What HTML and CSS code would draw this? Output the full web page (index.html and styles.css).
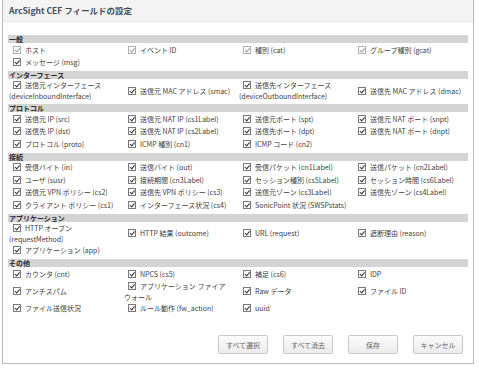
FILE: index.html
```html
<!DOCTYPE html>
<html lang="ja">
<head>
  <meta charset="UTF-8" />
  <meta name="viewport" content="width=device-width, initial-scale=1.0"/>
  <title>ArcSight CEF フィールドの設定</title>
  <link rel="stylesheet" href="styles.css">
</head>
<body>
  <div class="dialog">
    <div class="dialog-head">ArcSight CEF フィールドの設定</div>

    <div class="dialog-body">
      <!-- 一般 -->
      <div class="section">
        <div class="section-title">一般</div>
        <div class="fields">
          <label class="field"><span class="cb cb-locked"></span>ホスト</label>
          <label class="field"><span class="cb cb-locked"></span>イベント ID</label>
          <label class="field"><span class="cb cb-locked"></span>種別 (cat)</label>
          <label class="field"><span class="cb cb-locked"></span>グループ種別 (gcat)</label>
          <label class="field"><span class="cb"></span>メッセージ (msg)</label>
        </div>
      </div>

      <!-- インターフェース -->
      <div class="section">
        <div class="section-title">インターフェース</div>
        <div class="fields">
          <label class="field"><span class="cb"></span>送信元インターフェース<br>(deviceInboundInterface)</label>
          <label class="field"><span class="cb"></span>送信元 MAC アドレス (smac)</label>
          <label class="field"><span class="cb"></span>送信先インターフェース<br>(deviceOutboundInterface)</label>
          <label class="field"><span class="cb"></span>送信先 MAC アドレス (dmac)</label>
        </div>
      </div>

      <!-- プロトコル -->
      <div class="section">
        <div class="section-title">プロトコル</div>
        <div class="fields">
          <label class="field"><span class="cb"></span>送信元 IP (src)</label>
          <label class="field"><span class="cb"></span>送信元 NAT IP (cs1Label)</label>
          <label class="field"><span class="cb"></span>送信元ポート (spt)</label>
          <label class="field"><span class="cb"></span>送信元 NAT ポート (snpt)</label>
          <label class="field"><span class="cb"></span>送信先 IP (dst)</label>
          <label class="field"><span class="cb"></span>送信先 NAT IP (cs2Label)</label>
          <label class="field"><span class="cb"></span>送信先ポート (dpt)</label>
          <label class="field"><span class="cb"></span>送信先 NAT ポート (dnpt)</label>
          <label class="field"><span class="cb"></span>プロトコル (proto)</label>
          <label class="field"><span class="cb"></span>ICMP 種別 (cn1)</label>
          <label class="field"><span class="cb"></span>ICMP コード (cn2)</label>
        </div>
      </div>

      <!-- 接続 -->
      <div class="section">
        <div class="section-title">接続</div>
        <div class="fields">
          <label class="field"><span class="cb"></span>受信バイト (in)</label>
          <label class="field"><span class="cb"></span>送信バイト (out)</label>
          <label class="field"><span class="cb"></span>受信パケット (cn1Label)</label>
          <label class="field"><span class="cb"></span>送信パケット (cn2Label)</label>
          <label class="field"><span class="cb"></span>ユーザ (susr)</label>
          <label class="field"><span class="cb"></span>接続期間 (cn3Label)</label>
          <label class="field"><span class="cb"></span>セッション種別 (cs5Label)</label>
          <label class="field"><span class="cb"></span>セッション時間 (cs6Label)</label>
          <label class="field"><span class="cb"></span>送信元 VPN ポリシー (cs2)</label>
          <label class="field"><span class="cb"></span>送信先 VPN ポリシー (cs3)</label>
          <label class="field"><span class="cb"></span>送信元ゾーン (cs3Label)</label>
          <label class="field"><span class="cb"></span>送信先ゾーン (cs4Label)</label>
          <label class="field"><span class="cb"></span>クライアント ポリシー (cs1)</label>
          <label class="field"><span class="cb"></span>インターフェース状況 (cs4)</label>
          <label class="field"><span class="cb"></span>SonicPoint 状況 (SWSPstats)</label>
        </div>
      </div>

      <!-- アプリケーション -->
      <div class="section">
        <div class="section-title">アプリケーション</div>
        <div class="fields">
          <label class="field"><span class="cb"></span>HTTP オープン<br>(requestMethod)</label>
          <label class="field"><span class="cb"></span>HTTP 結果 (outcome)</label>
          <label class="field"><span class="cb"></span>URL (request)</label>
          <label class="field"><span class="cb"></span>遮断理由 (reason)</label>
          <label class="field"><span class="cb"></span>アプリケーション (app)</label>
        </div>
      </div>

      <!-- その他 -->
      <div class="section">
        <div class="section-title">その他</div>
        <div class="fields">
          <label class="field"><span class="cb"></span>カウンタ (cnt)</label>
          <label class="field"><span class="cb"></span>NPCS (cs5)</label>
          <label class="field"><span class="cb"></span>補足 (cs6)</label>
          <label class="field"><span class="cb"></span>IDP</label>
          <label class="field"><span class="cb"></span>アンチスパム</label>
          <label class="field"><span class="cb"></span>アプリケーション ファイア<br>ウォール</label>
          <label class="field"><span class="cb"></span>Raw データ</label>
          <label class="field"><span class="cb"></span>ファイル ID</label>
          <label class="field"><span class="cb"></span>ファイル送信状況</label>
          <label class="field"><span class="cb"></span>ルール動作 (fw_action)</label>
          <label class="field"><span class="cb"></span>uuid</label>
        </div>
      </div>

      <div class="actions">
        <button type="button" class="btn">すべて選択</button>
        <button type="button" class="btn">すべて消去</button>
        <button type="button" class="btn">保存</button>
        <button type="button" class="btn">キャンセル</button>
      </div>
    </div>
  </div>
</body>
</html>
```

FILE: styles.css
```css
body {
  margin: 0;
  font-family: "Noto Sans CJK JP", "Noto Sans", sans-serif;
  background-color: #fff;
  color: #404040;
}

.dialog {
  width: 470px;
  margin-left: 2px;
  border: 1px solid #b9b9b9;
  border-top: none;
  background-color: #fff;
}

.dialog-head {
  height: 21px;
  line-height: 21px;
  padding-left: 6px;
  background-color: #f4f4f4;
  border-bottom: 1px solid #e6e6e6;
  color: #404d5e;
  font-size: 8.5px;
  font-weight: bold;
}

.dialog-body {
  padding: 13px 5px 9px;
}

.section-title {
  height: 8px;
  line-height: 8px;
  padding-left: 1px;
  background-color: #d4d4d4;
  color: #2b2b2b;
  font-size: 7px;
  font-weight: bold;
}

.fields {
  display: grid;
  grid-template-columns: repeat(4, 115px);
  grid-auto-rows: minmax(12.5px, auto);
  align-items: center;
  padding: 1px 0 2px;
}

.field {
  padding-left: 1px;
  font-size: 7px;
  line-height: 11px;
  white-space: nowrap;
}

/* checked box */
.cb {
  display: inline-block;
  position: relative;
  width: 6px;
  height: 6px;
  margin: 0 4px 0 4px;
  border: 1px solid #7a7a7a;
  background-color: #fff;
  vertical-align: -1px;
}

.cb::after {
  content: "";
  position: absolute;
  left: 2px;
  top: 0;
  width: 1.5px;
  height: 3.5px;
  border: solid #333;
  border-width: 0 1px 1px 0;
  transform: rotate(40deg);
}

.cb-locked {
  border-color: #b0b0b0;
}

.cb-locked::after {
  border-color: #9a9a9a;
}

.actions {
  display: flex;
  justify-content: flex-end;
  gap: 15px;
  margin-top: 18px;
  padding-right: 5px;
}

.btn {
  width: 50px;
  height: 19px;
  padding: 0;
  border: 1px solid #c8c8c8;
  border-radius: 2px;
  background: linear-gradient(#fbfbfb, #ececec);
  color: #666;
  font-family: inherit;
  font-size: 7px;
}
```
